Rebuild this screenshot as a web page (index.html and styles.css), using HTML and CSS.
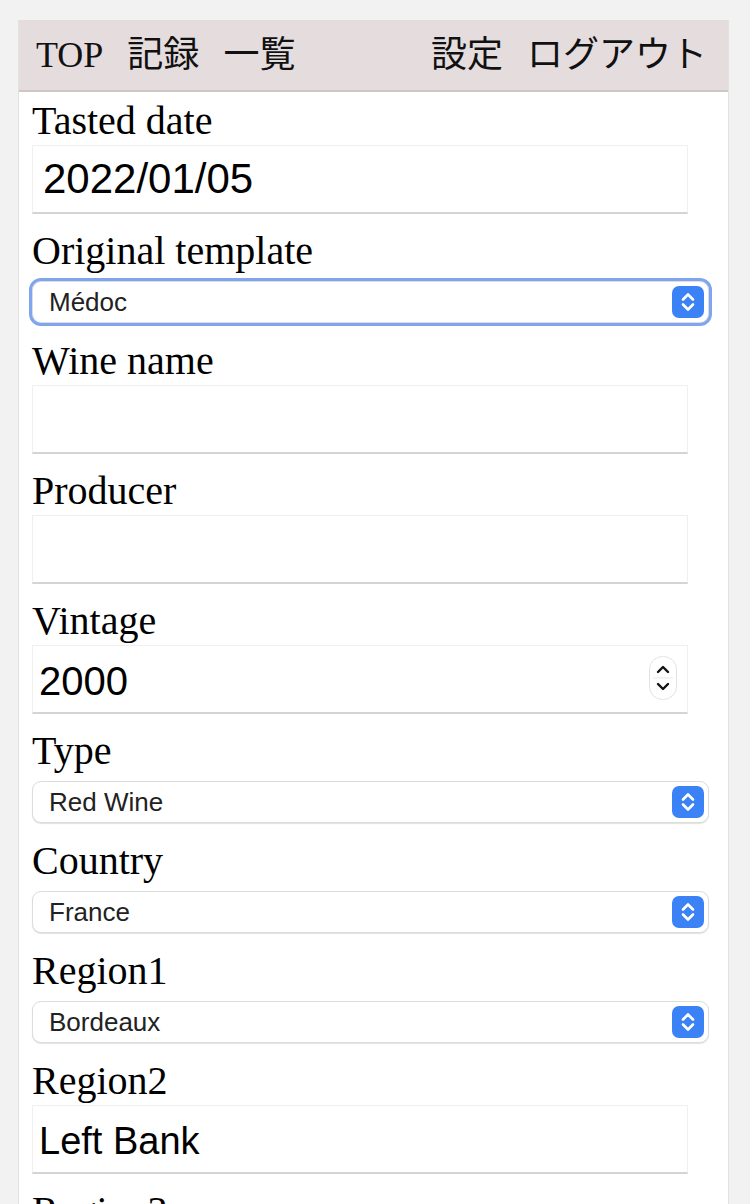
FILE: index.html
```html
<!DOCTYPE html>
<html lang="ja">
<head>
<meta charset="utf-8">
<title>Tasting record</title>
<link rel="stylesheet" href="styles.css">
</head>
<body>
<div class="page">
  <nav class="header">
    <div class="nav-left">
      <a class="nav-item">TOP</a>
      <a class="nav-item">記録</a>
      <a class="nav-item">一覧</a>
    </div>
    <div class="nav-right">
      <a class="nav-item">設定</a>
      <a class="nav-item">ログアウト</a>
    </div>
  </nav>
  <form class="form">
    <div class="row row-text">
      <label class="label">Tasted date</label>
      <div class="field field-date"><span class="value">2022/01/05</span></div>
    </div>
    <div class="row row-select">
      <label class="label">Original template</label>
      <div class="select focused"><span class="select-value">Médoc</span>
        <svg class="stepper" viewBox="0 0 32 32" width="32" height="32"><rect x="0" y="0" width="32" height="32" rx="7" fill="#3b82f6"/><path d="M11 13.5 L16 8.5 L21 13.5" fill="none" stroke="#fff" stroke-width="2.6" stroke-linecap="round" stroke-linejoin="round"/><path d="M11 18.5 L16 23.5 L21 18.5" fill="none" stroke="#fff" stroke-width="2.6" stroke-linecap="round" stroke-linejoin="round"/></svg>
      </div>
    </div>
    <div class="row row-text">
      <label class="label">Wine name</label>
      <div class="field"><span class="value"></span></div>
    </div>
    <div class="row row-text">
      <label class="label">Producer</label>
      <div class="field"><span class="value"></span></div>
    </div>
    <div class="row row-text">
      <label class="label">Vintage</label>
      <div class="field field-number"><span class="value">2000</span>
        <svg class="spin" viewBox="0 0 28 44" width="28" height="44"><rect x="0.5" y="0.5" width="27" height="43" rx="13" fill="#fff" stroke="#e2e2e2"/><line x1="4" y1="22" x2="24" y2="22" stroke="#e8e8e8"/><path d="M9 16 L14 11 L19 16" fill="none" stroke="#111" stroke-width="2.4" stroke-linecap="round" stroke-linejoin="round"/><path d="M9 28 L14 33 L19 28" fill="none" stroke="#111" stroke-width="2.4" stroke-linecap="round" stroke-linejoin="round"/></svg>
      </div>
    </div>
    <div class="row row-select">
      <label class="label">Type</label>
      <div class="select"><span class="select-value">Red Wine</span>
        <svg class="stepper" viewBox="0 0 32 32" width="32" height="32"><rect x="0" y="0" width="32" height="32" rx="7" fill="#3b82f6"/><path d="M11 13.5 L16 8.5 L21 13.5" fill="none" stroke="#fff" stroke-width="2.6" stroke-linecap="round" stroke-linejoin="round"/><path d="M11 18.5 L16 23.5 L21 18.5" fill="none" stroke="#fff" stroke-width="2.6" stroke-linecap="round" stroke-linejoin="round"/></svg>
      </div>
    </div>
    <div class="row row-select">
      <label class="label">Country</label>
      <div class="select"><span class="select-value">France</span>
        <svg class="stepper" viewBox="0 0 32 32" width="32" height="32"><rect x="0" y="0" width="32" height="32" rx="7" fill="#3b82f6"/><path d="M11 13.5 L16 8.5 L21 13.5" fill="none" stroke="#fff" stroke-width="2.6" stroke-linecap="round" stroke-linejoin="round"/><path d="M11 18.5 L16 23.5 L21 18.5" fill="none" stroke="#fff" stroke-width="2.6" stroke-linecap="round" stroke-linejoin="round"/></svg>
      </div>
    </div>
    <div class="row row-select">
      <label class="label">Region1</label>
      <div class="select"><span class="select-value">Bordeaux</span>
        <svg class="stepper" viewBox="0 0 32 32" width="32" height="32"><rect x="0" y="0" width="32" height="32" rx="7" fill="#3b82f6"/><path d="M11 13.5 L16 8.5 L21 13.5" fill="none" stroke="#fff" stroke-width="2.6" stroke-linecap="round" stroke-linejoin="round"/><path d="M11 18.5 L16 23.5 L21 18.5" fill="none" stroke="#fff" stroke-width="2.6" stroke-linecap="round" stroke-linejoin="round"/></svg>
      </div>
    </div>
    <div class="row row-text">
      <label class="label">Region2</label>
      <div class="field"><span class="value">Left Bank</span></div>
    </div>
    <div class="row row-text">
      <label class="label">Region3</label>
      <div class="field"><span class="value"></span></div>
    </div>
  </form>
</div>
</body>
</html>
```
FILE: styles.css
```css
html, body {
  margin: 0;
  padding: 0;
  background: #f2f2f2;
}
body {
  height: 1204px;
  overflow: hidden;
}
.page {
  margin: 20px 0 0 18px;
  width: 711px;
  background: #fff;
  border-left: 1px solid #e2e2e2;
  border-right: 1px solid #e2e2e2;
  box-sizing: border-box;
  min-height: 1184px;
}
.header {
  height: 70px;
  background: #e5dcde;
  border-bottom: 2px solid #cfc6c8;
  display: flex;
  justify-content: space-between;
  align-items: center;
  padding: 0 21px 0 17px;
  font-family: "Liberation Serif", "Noto Sans CJK JP", serif;
  font-size: 36px;
  color: #111;
}
.nav-left, .nav-right {
  display: flex;
  gap: 24px;
}
.nav-item {
  line-height: 40px;
}
.form {
  padding: 8px 0 0 13px;
}
.label {
  display: block;
  font-family: "Liberation Serif", serif;
  font-size: 40px;
  line-height: 42px;
  color: #000;
}
.row-text .label { margin-bottom: 3px; }
.row-text { margin-bottom: 16px; }
.row-select .label { margin-bottom: 9px; }
.row-select { margin-bottom: 17px; }
.field {
  width: 656px;
  height: 69px;
  box-sizing: border-box;
  border: 1px solid #efefef;
  border-bottom: 2px solid #d4d4d4;
  background: #fff;
  display: flex;
  align-items: center;
  padding: 4px 6px 0;
  font-family: "Liberation Sans", Arial, sans-serif;
  font-size: 38px;
  color: #000;
}
.field-date {
  padding: 0 0 0 10px;
  font-size: 42px;
}
.field-number {
  justify-content: space-between;
  padding: 0 10px 0 6px;
  font-size: 40px;
}
.field-number .spin {
  margin-top: -2px;
}
.field-number .value {
  padding-top: 4px;
}
.select {
  width: 677px;
  height: 42px;
  box-sizing: border-box;
  border: 1px solid #dcdcdc;
  border-radius: 9px;
  box-shadow: 0 1px 1px rgba(0,0,0,0.12);
  display: flex;
  align-items: center;
  justify-content: space-between;
  padding: 0 4px 0 16px;
  font-family: "Liberation Sans", Arial, sans-serif;
  font-size: 26px;
  color: #222;
  background: #fff;
}
.select.focused {
  outline: 3px solid #7ea5ee;
  outline-offset: 0;
}
.stepper {
  display: block;
}
.spin {
  display: block;
}
```
